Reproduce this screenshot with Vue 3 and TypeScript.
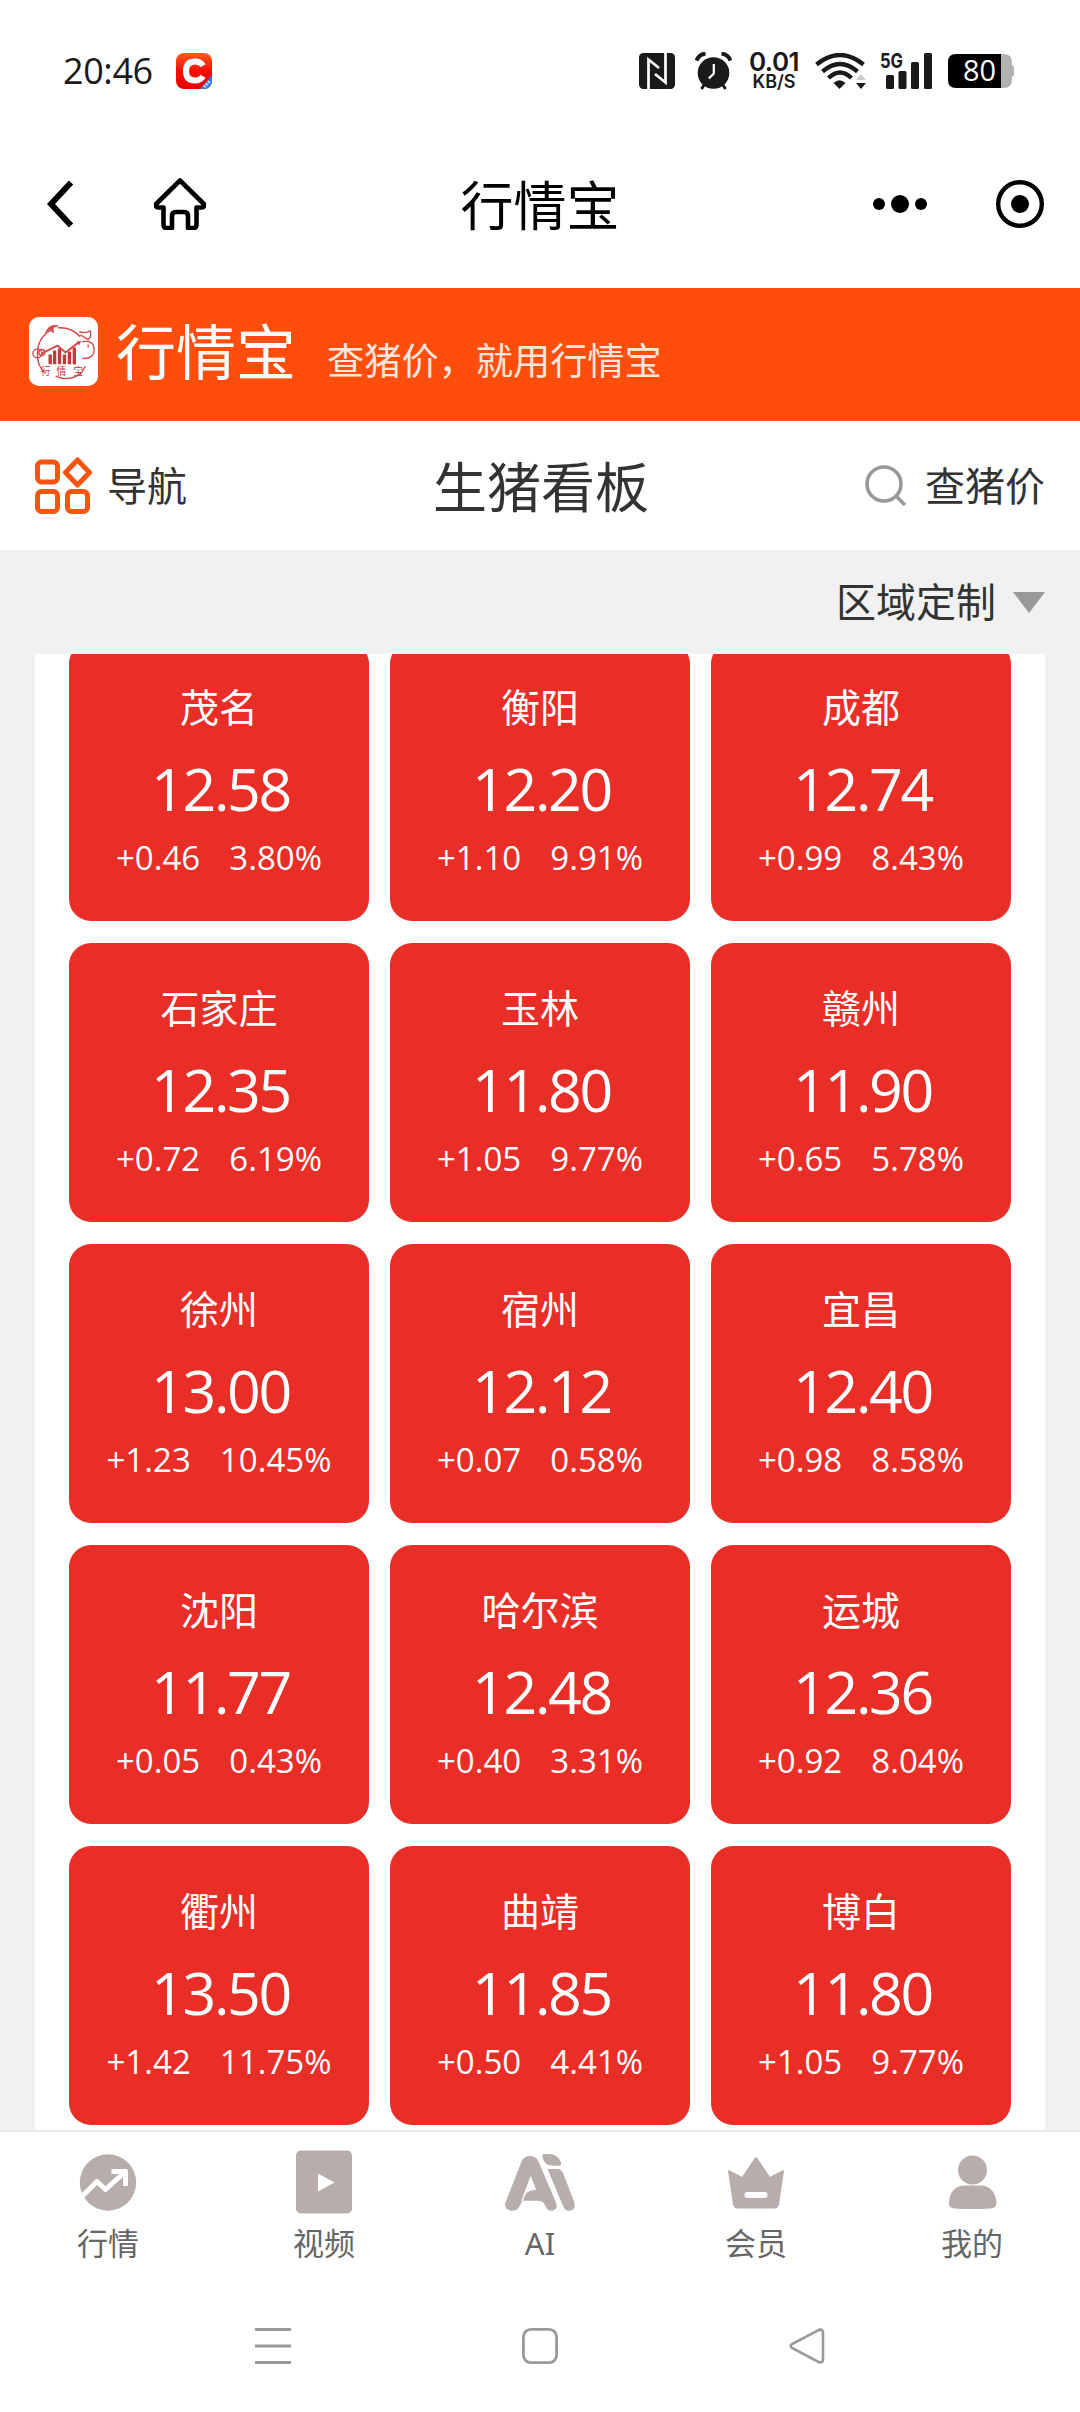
<script setup lang="ts">
interface Quote {
  city: string
  price: string
  change: string
  percent: string
}

const quotes: Quote[] = [
  { city: '茂名', price: '12.58', change: '+0.46', percent: '3.80%' },
  { city: '衡阳', price: '12.20', change: '+1.10', percent: '9.91%' },
  { city: '成都', price: '12.74', change: '+0.99', percent: '8.43%' },
  { city: '石家庄', price: '12.35', change: '+0.72', percent: '6.19%' },
  { city: '玉林', price: '11.80', change: '+1.05', percent: '9.77%' },
  { city: '赣州', price: '11.90', change: '+0.65', percent: '5.78%' },
  { city: '徐州', price: '13.00', change: '+1.23', percent: '10.45%' },
  { city: '宿州', price: '12.12', change: '+0.07', percent: '0.58%' },
  { city: '宜昌', price: '12.40', change: '+0.98', percent: '8.58%' },
  { city: '沈阳', price: '11.77', change: '+0.05', percent: '0.43%' },
  { city: '哈尔滨', price: '12.48', change: '+0.40', percent: '3.31%' },
  { city: '运城', price: '12.36', change: '+0.92', percent: '8.04%' },
  { city: '衢州', price: '13.50', change: '+1.42', percent: '11.75%' },
  { city: '曲靖', price: '11.85', change: '+0.50', percent: '4.41%' },
  { city: '博白', price: '11.80', change: '+1.05', percent: '9.77%' },
]
</script>

<template>
  <div class="screen">
    <header class="status">
      <span class="clock">20:46</span>
      <svg class="app-badge" width="36" height="36" viewBox="0 0 36 36">
        <defs>
          <linearGradient id="badge" x1="0" y1="0" x2="0" y2="1">
            <stop offset="0" stop-color="#ff5a1e" />
            <stop offset="0.5" stop-color="#fb0d05" />
            <stop offset="1" stop-color="#e60000" />
          </linearGradient>
          <clipPath id="badge-clip"><rect width="36" height="36" rx="8" /></clipPath>
        </defs>
        <g clip-path="url(#badge-clip)">
          <rect width="36" height="36" fill="url(#badge)" />
          <path d="M24 36 36 22v14z" fill="#2f78e8" />
          <path d="M28 34l6-6" stroke="#b9d4ff" stroke-width="3" stroke-dasharray="2 1" />
          <path d="M27 12.8Q24.500 8.500 19 8.500Q10 8.500 10 18T19 27.500Q24.500 27.500 27 23.200" fill="none" stroke="#fff" stroke-width="6" />
        </g>
      </svg>
      <div class="status-right">
        <svg width="36" height="36" viewBox="0 0 36 36">
          <rect width="36" height="36" rx="4.500" fill="#1a1a1a" />
          <path d="M9.500 36V6.500L20 15M26.500 0v29.500L16 21" fill="none" stroke="#fff" stroke-width="2.700" />
        </svg>
        <svg class="alarm" width="37" height="38" viewBox="0 0 37 38">
          <circle cx="18.500" cy="21" r="15.800" fill="#1a1a1a" />
          <path d="M1.500 8.500Q4 2.500 10.500 1.500M35.500 8.500Q33 2.500 26.500 1.500" fill="none" stroke="#1a1a1a" stroke-width="4" />
          <path d="M9 33l-2.500 4M28 33l2.500 4" stroke="#1a1a1a" stroke-width="3" />
          <path d="M18.800 12v9.500l-5 5" fill="none" stroke="#fff" stroke-width="2.200" />
        </svg>
        <div class="speed"><b>0.01</b><i>KB/S</i></div>
        <svg class="wifi" width="52" height="37" viewBox="0 0 52 37">
          <g fill="none" stroke="#1a1a1a" stroke-width="4.400">
            <path d="M1.500 11.500Q25 -7.500 48.500 11.500" />
            <path d="M7.500 18.500Q25 3.500 42.500 18.500" />
            <path d="M13.500 25Q25 14 36.500 25" />
          </g>
          <path d="M18.500 30q6-5.500 12 0l-6 6z" fill="#1a1a1a" />
          <path d="M41 27h10l-5-6z" fill="#ccc" />
          <path d="M41 30h10l-5 6z" fill="#1a1a1a" />
        </svg>
        <svg class="signal" width="54" height="53" viewBox="-1 -8 54 53">
          <text x="0" y="14.500" textLength="23" lengthAdjust="spacingAndGlyphs">5G</text>
          <g fill="#1a1a1a">
            <rect x="6" y="22" width="8" height="14" rx="1.500" />
            <rect x="18.500" y="18" width="8" height="18" rx="1.500" />
            <rect x="31" y="9" width="8" height="27" rx="1.500" />
            <rect x="44" y="0" width="8" height="36" rx="1.500" />
          </g>
        </svg>
        <svg class="battery" width="67" height="50" viewBox="0 -8 67 50">
          <path d="M53 0h3q8 0 8 9v2l2 2v8l-2 2v2q0 9-8 9h-3z" fill="#b2b2b2" />
          <path d="M8 0h45v34H8q-8 0-8-8V8q0-8 8-8z" fill="#000" />
          <text x="15" y="27" textLength="33" lengthAdjust="spacingAndGlyphs">80</text>
        </svg>
      </div>
    </header>

    <div class="titlebar">
      <div class="side">
        <svg class="back" width="27" height="48" viewBox="0 0 27 48">
          <path d="M24 2.500 4 24l20 21.500" fill="none" stroke="#000" stroke-width="6" />
        </svg>
        <svg width="52" height="52" viewBox="0 0 52 52">
          <path d="M26 2.500 2.200 26Q1 29 4.500 29.500H9.500V46Q9.500 50 12.500 50H18V38Q18 34 22 34H30Q34 34 34 38V50H39.500Q42.500 50 42.500 46V29.500H47.500Q51 29 49.800 26Z" fill="none" stroke="#000" stroke-width="4.600" stroke-linejoin="round" />
        </svg>
      </div>
      <h1>行情宝</h1>
      <div class="side end">
        <svg width="54" height="18" viewBox="0 0 54 18">
          <circle cx="6" cy="9" r="6" /><circle cx="27" cy="9" r="9" /><circle cx="48" cy="9" r="6" />
        </svg>
        <svg width="48" height="48" viewBox="0 0 48 48">
          <circle cx="24" cy="24" r="21.800" fill="none" stroke="#000" stroke-width="4.400" />
          <circle cx="24" cy="24" r="9" />
        </svg>
      </div>
    </div>

    <section class="banner">
      <svg class="logo" width="69" height="69" viewBox="0 0 70 70">
        <rect width="70" height="70" rx="10" fill="#fff" />
        <g fill="none" stroke="#d4494a" stroke-width="1.400">
          <path d="M23 13Q9 20 8.500 37Q8 50 17 57M29 11Q43 10 52 20M27 60Q39 66 52 58Q55 55 57 50" />
          <circle cx="8.500" cy="37" r="4.500" /><circle cx="13" cy="36" r="3" />
          <path d="M51 15Q58 17 62 14Q64 20 60 23L52 18M54 25Q66 23 66 33Q66 43 54 42M60 28v3" />
          <path d="M13 37 29 29 37 36 50 26" stroke-width="2" />
        </g>
        <path d="M16 17Q20 5 31 9L25 11 25 17 21 13zM48 25l5-1-2 5z" fill="#d4494a" />
        <path d="M21.500 48V38M26 48V34M31 48V32M36 48V38M41 48V35M46 48V31" stroke="#c7383b" stroke-width="3.400" />
        <text x="12" y="59">行</text><text x="28" y="59">情</text><text x="45" y="59">宝</text>
      </svg>
      <strong>行情宝</strong>
      <span>查猪价，就用行情宝</span>
    </section>

    <nav class="toolbar">
      <div class="tool left">
        <svg width="58" height="58" viewBox="0 0 58 58">
          <g fill="none" stroke="#fb5410" stroke-width="5" stroke-linejoin="round">
            <rect x="3.500" y="5" width="20" height="20" rx="4" />
            <rect x="3.500" y="34.500" width="20" height="20" rx="4" />
            <rect x="33.500" y="34.500" width="20" height="20" rx="4" />
            <path d="M43.500 3 55.500 15.500 43.500 28 31.500 15.500z" />
          </g>
        </svg>
        <span>导航</span>
      </div>
      <h2>生猪看板</h2>
      <div class="tool right">
        <svg width="42" height="42" viewBox="0 0 42 42">
          <circle cx="19" cy="19" r="17" fill="none" stroke="#999" stroke-width="3.600" />
          <path d="M31 31l9 9" stroke="#999" stroke-width="3.600" />
        </svg>
        <span>查猪价</span>
      </div>
    </nav>

    <div class="filter">
      <span>区域定制</span>
      <svg width="32" height="21" viewBox="0 0 32 21"><path d="M0 0h32L16 21z" fill="#999" /></svg>
    </div>

    <main class="board">
      <div class="grid">
        <article v-for="q in quotes" :key="q.city" class="card">
          <div class="city">{{ q.city }}</div>
          <div class="price">{{ q.price }}</div>
          <div class="delta"><span>{{ q.change }}</span><span>{{ q.percent }}</span></div>
        </article>
      </div>
    </main>

    <footer class="tabs">
      <div class="tab">
        <svg width="72" height="64" viewBox="0 0 72 64">
          <circle cx="36" cy="32.500" r="28.200" />
          <path d="M9.500 47 25 31.500 33.500 39.500 53.500 21.500M39.500 21.500H53.500V36" fill="none" stroke="#fff" stroke-width="5" stroke-linejoin="round" />
        </svg>
        <span>行情</span>
      </div>
      <div class="tab">
        <svg width="72" height="64" viewBox="0 0 72 64">
          <rect x="8" y="0.500" width="56" height="63" rx="5" />
          <path d="M30 23.500 46.500 32.500 30 41.500z" fill="#fff" />
        </svg>
        <span>视频</span>
      </div>
      <div class="tab">
        <svg width="72" height="64" viewBox="0 0 72 64">
          <path d="M1.500 52.500 17.500 11.500Q20 6 26 6Q32 6 34.500 11.500L52.200 53Q54 58.500 49.500 60.500Q44.500 62 42 57Q39.500 50.700 34.500 50.700H18.700L15 57Q12 62 6 60.500Q-0.500 58.500 1.500 52.500z" />
          <path d="M26.700 25.700 17.200 50.700 18.900 50.700Q21.500 40 30 40H32.200z" fill="#fff" />
          <path d="M39.500 4H45Q54 4 57 12.500Q57.500 15.700 55 15.700H49Q40.500 15.700 38.500 7.500Q38 4.500 39.500 4z" />
          <path d="M43.500 19H53.500Q57.500 19 59.500 24L70.300 52.500Q72 58.500 67 60.500Q62 62 59.500 57z" />
        </svg>
        <span>AI</span>
      </div>
      <div class="tab">
        <svg width="72" height="64" viewBox="0 0 72 64">
          <path d="M8 21Q8 20 10 20.500L22 27 34 9Q36 5.500 38 9L50 27 62 20.500Q64 20 64 21L59 54Q58.500 58.500 54 58.500H18Q13.500 58.500 13 54z" />
          <rect x="24.500" y="42" width="23" height="6" rx="3" fill="#fff" />
        </svg>
        <span>会员</span>
      </div>
      <div class="tab">
        <svg width="72" height="64" viewBox="0 0 72 64">
          <circle cx="36.500" cy="20" r="14.500" />
          <path d="M13 52Q14.500 35.500 29.500 35.500H44.500Q58.500 36 60.500 52Q61 58.500 54.500 58.500Q36.500 59.500 18.500 58.500Q12.500 58.500 13 52z" />
        </svg>
        <span>我的</span>
      </div>
    </footer>

    <div class="sysnav">
      <svg width="36" height="36" viewBox="0 0 36 36"><path d="M0 1.500h36M0 18h36M0 34.500h36" stroke="#999" stroke-width="3" /></svg>
      <svg width="36" height="36" viewBox="0 0 36 36"><rect x="1.400" y="1.400" width="33.200" height="33.200" rx="7.500" fill="none" stroke="#999" stroke-width="2.800" /></svg>
      <svg width="36" height="36" viewBox="0 0 36 36"><path d="M30 1.800 3 16Q0.500 18 3 20L30 34.200Q34 35 34 31.500V4.500Q34 1 30 1.800z" fill="none" stroke="#999" stroke-width="2.600" /></svg>
    </div>
  </div>
</template>

<style>
body { margin: 0; }
</style>

<style scoped>
.screen {
  width: 1080px;
  height: 2412px;
  display: flex;
  flex-direction: column;
  background: #fff;
  color: #333;
  font-family: "Noto Sans", "Noto Sans CJK SC", sans-serif;
  overflow: hidden;
}
.screen > * { flex-shrink: 0; box-sizing: border-box; }
svg { display: block; flex-shrink: 0; }
h1, h2 { margin: 0; font-weight: 400; }

.status {
  height: 142px;
  display: flex;
  align-items: center;
  padding: 0 65px 0 63px;
}
.clock { width: 113px; font-family: "Open Sans", sans-serif; font-size: 36px; letter-spacing: -0.400px; color: #1a1a1a; font-weight: 370; line-height: 50px; }
.status-right { margin-left: auto; display: flex; align-items: center; }
.alarm { margin-left: 20px; }
.speed {
  width: 56px;
  margin-left: 14px;
  display: flex;
  flex-direction: column;
  align-items: center;
  color: #1a1a1a;
  font-family: Inter, sans-serif;
}
.speed b { font-size: 26px; line-height: 20px; font-weight: 600; letter-spacing: -0.500px; }
.speed i { margin-top: 1px; font-size: 18px; line-height: 17px; font-weight: 600; font-style: normal; }
.wifi { margin-left: 13px; }
.signal { margin-left: 12px; }
.signal text { font: 700 20px Inter, sans-serif; fill: #1a1a1a; }
.battery { margin-left: 15px; }
.battery text { font: 400 29px "Open Sans", sans-serif; fill: #fff; }

.titlebar {
  height: 146px;
  padding: 0 36px 22px 47px;
  display: flex;
  align-items: center;
  color: #000;
}
.side { width: 300px; display: flex; align-items: center; gap: 80px; }
.side.end { justify-content: flex-end; gap: 69px; }
h1 { flex: 1; text-align: center; font-size: 53px; line-height: 60px; padding: 4px 11px 0 0; }

.banner {
  height: 133px;
  padding: 4px 0 10px 29px;
  display: flex;
  align-items: center;
  background: #ff4e0c;
  color: #fff;
}
.logo text { font: 10px "Noto Sans CJK SC", sans-serif; fill: #c7383b; }
.banner strong { margin-left: 18px; font-size: 60px; line-height: 70px; font-weight: 400; }
.banner span { margin: 19px 0 0 31px; font-size: 37.200px; line-height: 44px; color: #ffe6dc; }

.toolbar { height: 129px; padding: 0 35px 0 34px; display: flex; align-items: center; }
.tool { width: 250px; display: flex; align-items: center; font-size: 40px; line-height: 50px; }
.tool.left { gap: 15px; }
.tool.right { justify-content: flex-end; gap: 18px; }
h2 { flex: 1; text-align: center; font-size: 54px; line-height: 64px; padding: 2px 0 0 3px; }

.filter {
  height: 104px;
  padding: 0 35px 0 0;
  display: flex;
  align-items: center;
  justify-content: flex-end;
  gap: 17px;
  background: #f1f1f1;
  font-size: 40px;
  line-height: 50px;
}

.board { height: 1476px; padding: 0 35px; background: #f1f1f1; }
.grid {
  height: 1476px;
  box-sizing: border-box;
  padding: 0 34px 5px;
  display: grid;
  grid-template-columns: repeat(3, 300px);
  grid-auto-rows: 279px;
  gap: 22px 21px;
  align-content: end;
  background: #fff;
  overflow: hidden;
}
.card {
  padding-top: 42px;
  display: flex;
  flex-direction: column;
  align-items: center;
  border-radius: 22px;
  background: #e92d27;
  color: #fff;
}
.card > div { font-family: "Open Sans", "Noto Sans CJK SC", sans-serif; }
.city { font-size: 39px; line-height: 46px; }
.price { margin-top: 23px; padding-left: 3px; font-size: 59px; line-height: 70px; font-weight: 370; letter-spacing: -2.300px; }
.delta { margin-top: 12px; display: flex; gap: 29px; font-size: 33px; line-height: 46px; letter-spacing: 0.050px; font-weight: 370; }

.tabs { height: 156px; border-top: 2px solid #e9ebea; display: flex; }
.tab { flex: 1; display: flex; flex-direction: column; align-items: center; padding-top: 18px; fill: #b7aeac; }
.tab span { margin-top: 9px; font-size: 31px; line-height: 40px; color: #666; }

.sysnav { height: 126px; padding: 42px 255px 0; display: flex; justify-content: space-between; }
</style>
